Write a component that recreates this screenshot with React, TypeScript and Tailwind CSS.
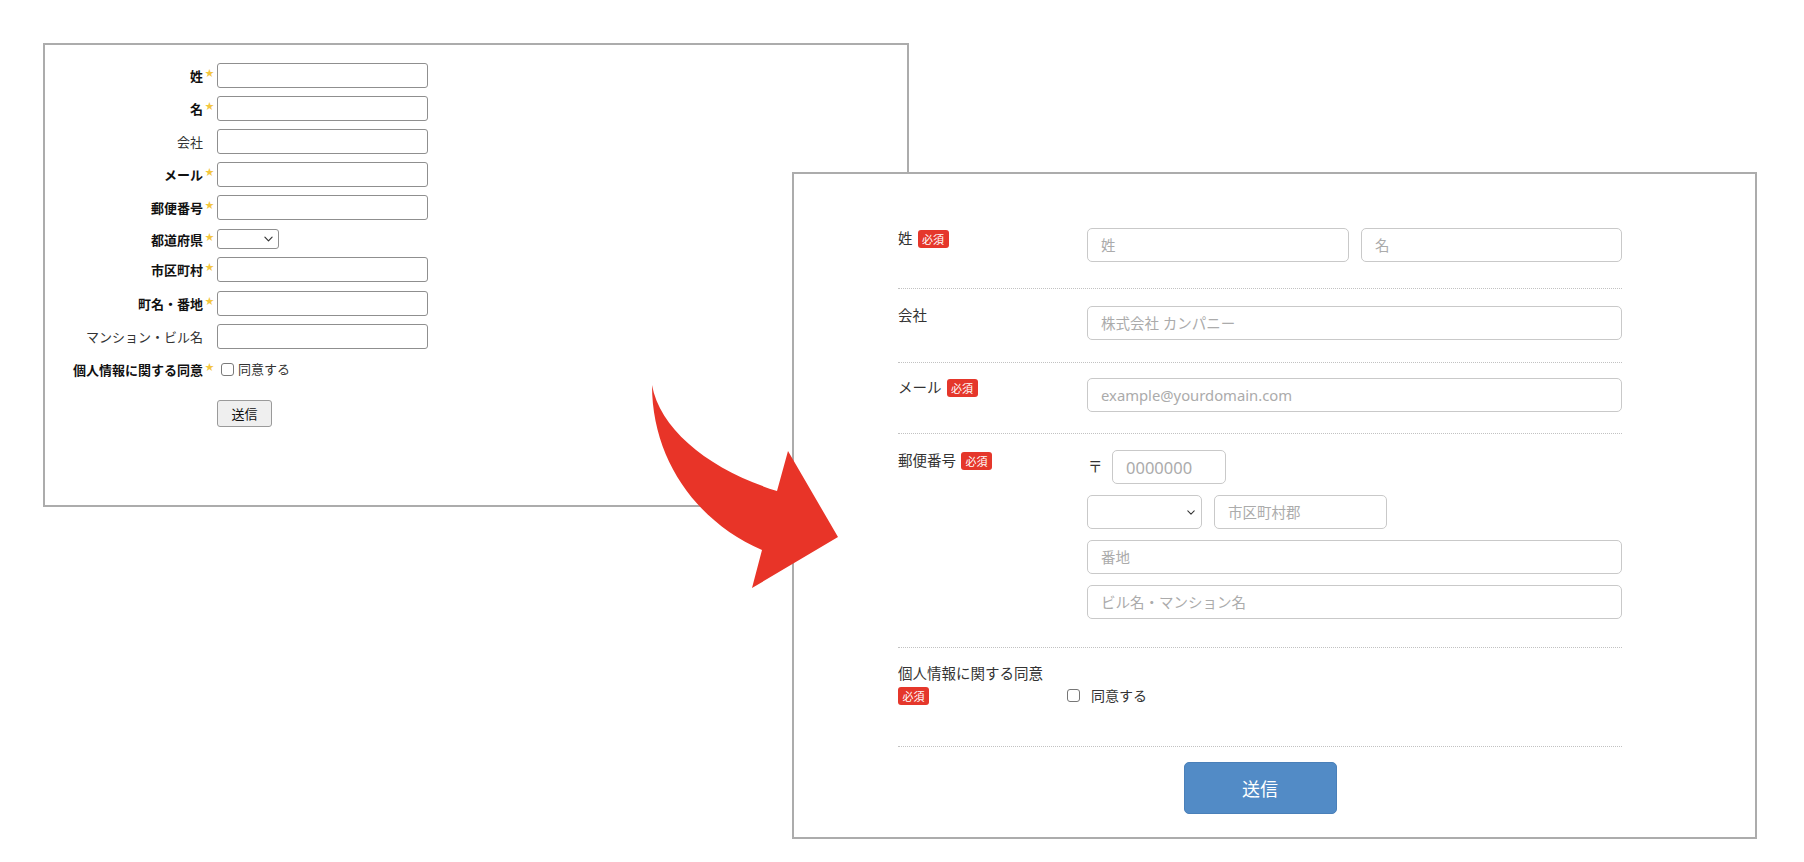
import React from 'react';

const jpSmall = { fontFamily: '"Noto Sans CJK JP", sans-serif' };
const jpForm = { fontFamily: '"Noto Sans", "Noto Sans CJK JP", sans-serif' };

function Star() {
  return <span className="text-[#f3c63f] text-[9px] leading-none mt-[-6px]">★</span>;
}

function Chevron({ className }: { className?: string }) {
  return (
    <svg viewBox="0 0 10 6" className={className} fill="none">
      <path d="M1 1l4 4 4-4" stroke="#333" strokeWidth="1.3" strokeLinecap="round" strokeLinejoin="round" />
    </svg>
  );
}

function OldRow({
  label,
  required,
  className = '',
  children
}: {
  label: string;
  required?: boolean;
  className?: string;
  children: React.ReactNode;
}) {
  return (
    <div className={`flex items-center ${className}`}>
      <div
        className={`w-[158px] shrink-0 text-right text-[13px] leading-none ${
          required ? 'font-bold text-[#111]' : 'text-[#333]'
        }`}
      >
        {label}
      </div>
      <div className="w-[14px] shrink-0 flex items-center pl-[2px]">{required && <Star />}</div>
      {children}
    </div>
  );
}

function OldInput() {
  return <div className="w-[211px] h-[25px] border border-[#8f8f8f] rounded-[3px] bg-white" />;
}

function OldForm() {
  return (
    <div
      className="absolute left-[43px] top-[43px] w-[866px] h-[464px] border-2 border-[#acacac] bg-white pt-[18px] flex flex-col"
      style={jpSmall}
    >
      <OldRow label="姓" required>
        <OldInput />
      </OldRow>
      <OldRow label="名" required className="mt-[8px]">
        <OldInput />
      </OldRow>
      <OldRow label="会社" className="mt-[8px]">
        <OldInput />
      </OldRow>
      <OldRow label="メール" required className="mt-[8px]">
        <OldInput />
      </OldRow>
      <OldRow label="郵便番号" required className="mt-[8px]">
        <OldInput />
      </OldRow>
      <OldRow label="都道府県" required className="mt-[9px]">
        <div className="w-[62px] h-[20px] border border-[#8f8f8f] rounded-[3px] bg-white flex items-center justify-end pr-[5px]">
          <Chevron className="w-[9px] h-[6px]" />
        </div>
      </OldRow>
      <OldRow label="市区町村" required className="mt-[8px]">
        <OldInput />
      </OldRow>
      <OldRow label="町名・番地" required className="mt-[9px]">
        <OldInput />
      </OldRow>
      <OldRow label="マンション・ビル名" className="mt-[8px]">
        <OldInput />
      </OldRow>
      <OldRow label="個人情報に関する同意" required className="mt-[10px] h-[20px]">
        <div className="flex items-center gap-[4px] pl-[4px] text-[13px] text-[#333]">
          <span className="w-[13px] h-[13px] border border-[#7a7a7a] rounded-[3px] bg-white" />
          同意する
        </div>
      </OldRow>
      <div className="mt-[21px] pl-[172px]">
        <button className="w-[55px] h-[27px] border border-[#9a9a9a] rounded-[3px] bg-[#efefef] text-[13px] text-[#111]">
          送信
        </button>
      </div>
    </div>
  );
}

function Badge({ className = '' }: { className?: string }) {
  return (
    <span
      className={`inline-flex items-center justify-center h-[18px] w-[31px] rounded-[3px] bg-[#e5372b] text-white text-[11px] leading-none ${className}`}
      style={jpSmall}
    >
      必須
    </span>
  );
}

function Field({ placeholder, className = '' }: { placeholder: string; className?: string }) {
  return (
    <input
      readOnly
      placeholder={placeholder}
      className={`h-[34px] border border-[#c9c9c9] rounded-[5px] bg-white px-[13px] text-[#333] placeholder:text-[#ababab] outline-none ${className}`}
    />
  );
}

function NewForm() {
  const row = 'flex border-b border-dotted border-[#c2c2c2]';
  const label = 'w-[189px] shrink-0 flex items-center gap-[5px] h-[20px] text-[14.5px] text-[#333]';
  return (
    <div
      className="absolute left-[792px] top-[172px] w-[965px] h-[667px] border-2 border-[#acacac] bg-white pt-[38px] pl-[104px]"
      style={jpForm}
    >
      <div className="w-[724px] flex flex-col">
        <div className={`${row} pt-[16px] pb-[26px]`}>
          <div className={`${label} mt-[1px]`}>
            姓<Badge />
          </div>
          <div className="flex-1 flex gap-[12px]">
            <Field placeholder="姓" className="w-[262px] text-[14.5px]" />
            <Field placeholder="名" className="w-[261px] text-[14.5px]" />
          </div>
        </div>

        <div className={`${row} pt-[17px] pb-[22px]`}>
          <div className={label}>会社</div>
          <Field placeholder="株式会社 カンパニー" className="flex-1 text-[14.5px]" />
        </div>

        <div className={`${row} pt-[15px] pb-[21px]`}>
          <div className={label}>
            メール<Badge />
          </div>
          <Field placeholder="example@yourdomain.com" className="flex-1 text-[14.8px]" />
        </div>

        <div className={`${row} pt-[16px] pb-[28px]`}>
          <div className={`${label} mt-[1px]`}>
            郵便番号<Badge />
          </div>
          <div className="flex-1 flex flex-col gap-[11px]">
            <div className="flex items-center">
              <span className="w-[25px] text-[14.5px] text-[#333] pl-[1px]">〒</span>
              <Field placeholder="0000000" className="w-[114px] text-[16.5px]" />
            </div>
            <div className="flex gap-[12px]">
              <div className="w-[115px] h-[34px] border border-[#c9c9c9] rounded-[5px] bg-white flex items-center justify-end pr-[6px]">
                <Chevron className="w-[8px] h-[5px]" />
              </div>
              <Field placeholder="市区町村郡" className="w-[173px] text-[14.5px]" />
            </div>
            <Field placeholder="番地" className="w-full text-[14.5px]" />
            <Field placeholder="ビル名・マンション名" className="w-full text-[14.5px]" />
          </div>
        </div>

        <div className={`${row} pt-[16px] pb-[41px]`}>
          <div className="w-[169px] shrink-0 flex flex-col items-start">
            <div className="h-[20px] flex items-center text-[14.5px] text-[#333]">個人情報に関する同意</div>
            <Badge className="mt-[3px]" />
          </div>
          <div className="flex items-center gap-[11px] mt-[25px] h-[13px] text-[14px] text-[#333]">
            <span className="w-[13px] h-[13px] border border-[#767676] rounded-[3px] bg-white" />
            <span style={jpSmall}>同意する</span>
          </div>
        </div>

        <div className="flex justify-center pt-[15px]">
          <button
            className="w-[153px] h-[52px] rounded-[5px] bg-[#528bc6] border border-[#4a80b9] text-white text-[18px]"
            style={jpSmall}
          >
            送信
          </button>
        </div>
      </div>
    </div>
  );
}

function Arrow() {
  return (
    <svg
      className="absolute left-0 top-0 pointer-events-none"
      width="1804"
      height="862"
      viewBox="0 0 1804 862"
    >
      <path
        d="M652 385 C660 430 710 470 777 491 L788 451 L838 537 L752 588 L762 550 C697 522 652 460 652 385 Z"
        fill="#e83428"
      />
    </svg>
  );
}

export default function App() {
  return (
    <div className="relative w-[1804px] h-[862px] bg-white overflow-hidden">
      <OldForm />
      <NewForm />
      <Arrow />
    </div>
  );
}
